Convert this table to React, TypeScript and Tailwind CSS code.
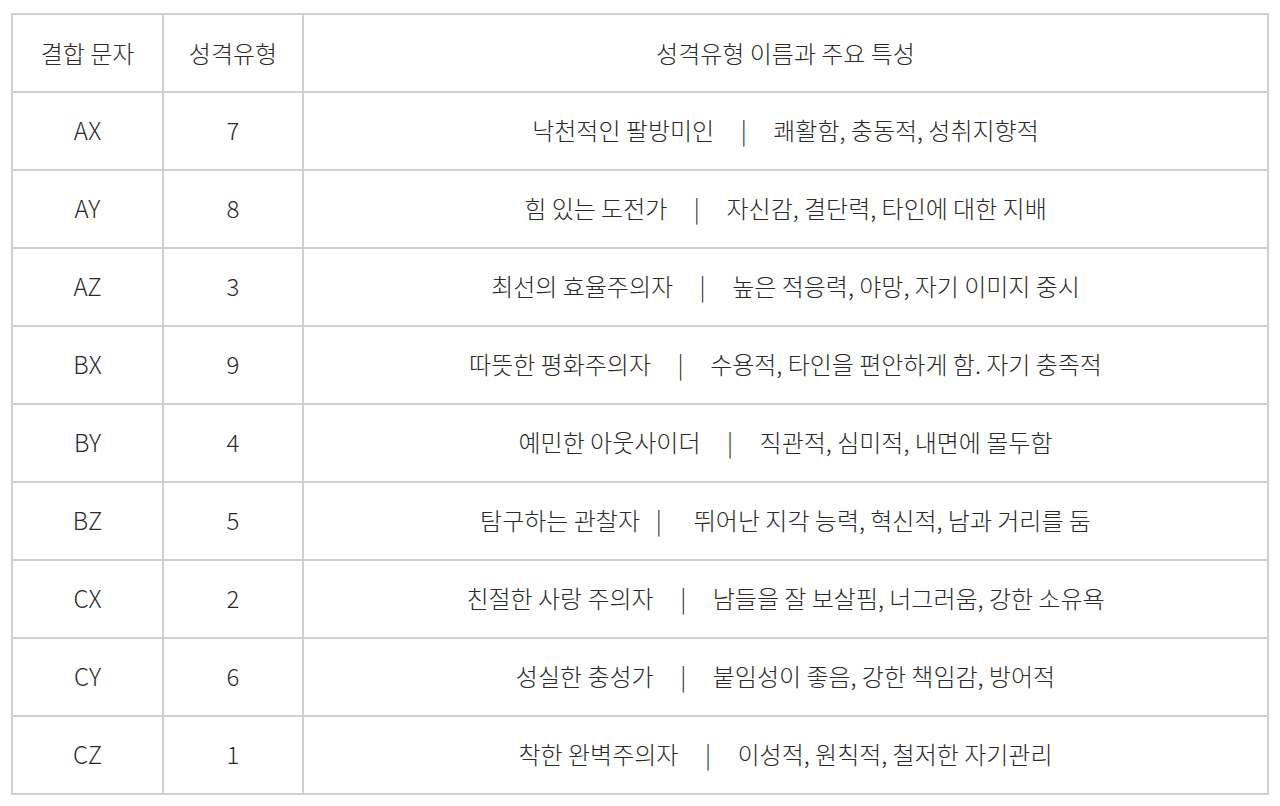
import React from "react";

const S5 = "\u00a0\u00a0\u00a0\u00a0\u00a0";
const sep = `${S5}|${S5}`;

const rows: [string, string, string][] = [
  ["AX", "7", `낙천적인 팔방미인${sep}쾌활함, 충동적, 성취지향적`],
  ["AY", "8", `힘 있는 도전가${sep}자신감, 결단력, 타인에 대한 지배`],
  ["AZ", "3", `최선의 효율주의자${sep}높은 적응력, 야망, 자기 이미지 중시`],
  ["BX", "9", `따뜻한 평화주의자${sep}수용적, 타인을 편안하게 함. 자기 충족적`],
  ["BY", "4", `예민한 아웃사이더${sep}직관적, 심미적, 내면에 몰두함`],
  ["BZ", "5", "탐구하는 관찰자\u00a0\u00a0\u00a0|\u00a0\u00a0\u00a0\u00a0\u00a0\u00a0뛰어난 지각 능력, 혁신적, 남과 거리를 둠"],
  ["CX", "2", `친절한 사랑 주의자${sep}남들을 잘 보살핌, 너그러움, 강한 소유욕`],
  ["CY", "6", `성실한 충성가${sep}붙임성이 좋음, 강한 책임감, 방어적`],
  ["CZ", "1", `착한 완벽주의자${sep}이성적, 원칙적, 철저한 자기관리`],
];

export default function App() {
  const cell = "border-2 border-[#cfcfcf] text-center align-middle h-[78px] p-0";
  return (
    <div
      className="w-[1280px] h-[806px] bg-white pl-[11px] pt-[13px] text-[#2a2a2a] font-light"
      style={{ fontFamily: '"Noto Sans CJK KR", "Noto Sans", sans-serif' }}
    >
      <table className="border-collapse w-[1258px] text-[24px] leading-none">
        <thead>
          <tr>
            <th className={`${cell} w-[151px] font-light`}>결합 문자</th>
            <th className={`${cell} w-[140px] font-light`}>성격유형</th>
            <th className={`${cell} font-light`}>성격유형 이름과 주요 특성</th>
          </tr>
        </thead>
        <tbody>
          {rows.map(([a, b, c]) => (
            <tr key={a}>
              <td className={`${cell} pb-[3px]`}>{a}</td>
              <td className={`${cell} pb-[3px]`}>{b}</td>
              <td className={`${cell} pb-[3px]`}>{c}</td>
            </tr>
          ))}
        </tbody>
      </table>
    </div>
  );
}
